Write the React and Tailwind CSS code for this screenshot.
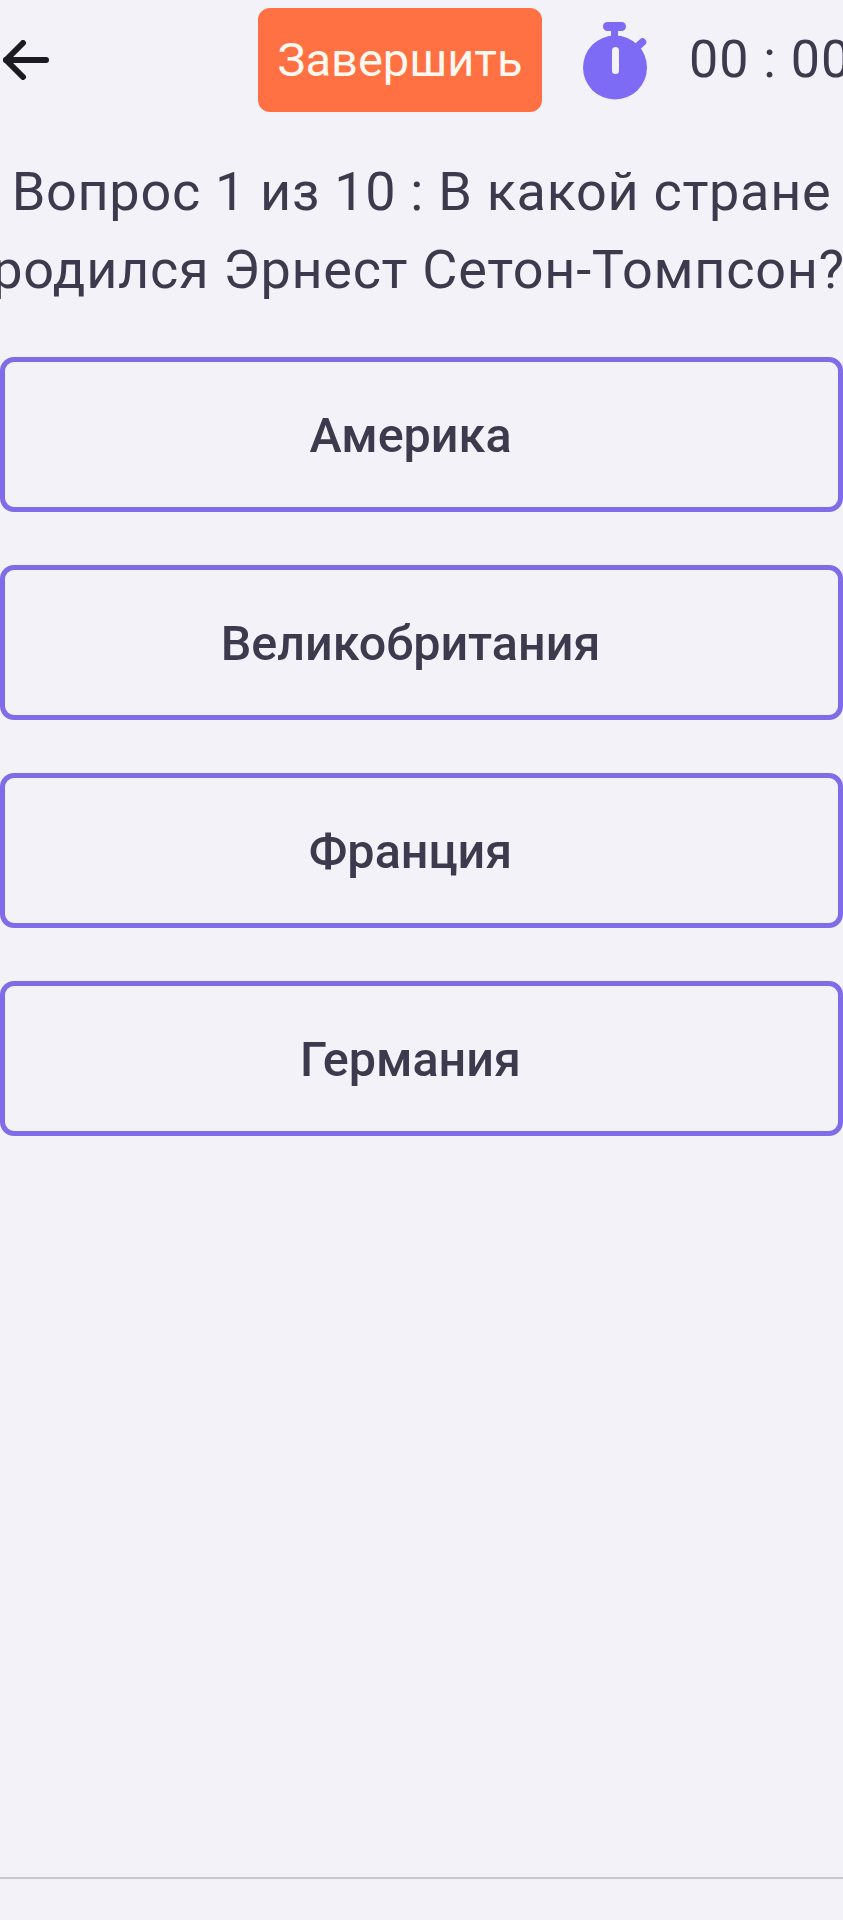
import React from 'react';

const answers = ['Америка', 'Великобритания', 'Франция', 'Германия'];

function Stopwatch() {
  return (
    <svg width="66" height="80" viewBox="0 0 66 80" className="shrink-0">
      <rect x="21" y="1" width="23" height="9" rx="4.5" fill="#7e6bf5" />
      <rect x="29" y="6" width="7" height="14" fill="#7e6bf5" />
      <path d="M54 27 L60.500 21" stroke="#7e6bf5" strokeWidth="7.500" strokeLinecap="round" />
      <circle cx="33" cy="46.500" r="32" fill="#7e6bf5" />
      <rect x="30" y="26" width="7" height="27" rx="3.500" fill="#f3f2f8" />
    </svg>
  );
}

export default function App() {
  return (
    <div className="relative h-[1920px] w-[843px] overflow-hidden bg-[#f3f2f8] font-['Roboto',sans-serif] text-[#3c3a4c]">
      <header className="flex h-[120px] items-start">
        <svg width="48" height="40" viewBox="0 0 48 40" className="mt-[40px] ml-[2px] shrink-0" fill="none" stroke="#1c1b24" strokeWidth="6" strokeLinecap="round" strokeLinejoin="round">
          <path d="M4 20 H44" />
          <path d="M21 3 L4 20 L21 37" />
        </svg>
        <button className="mt-[8px] ml-[208px] flex h-[104px] w-[284px] shrink-0 items-center justify-center rounded-[12px] bg-[#ff7043] text-[47px] text-[#fff8ef]">
          Завершить
        </button>
        <div className="mt-[21px] ml-[40px] shrink-0">
          <Stopwatch />
        </div>
        <span className="mt-[28px] ml-[41px] shrink-0 whitespace-nowrap text-[52px] leading-[64px] tracking-[1px]">00 : 00</span>
      </header>
      <h1 className="mt-[33px] -mx-[40px] text-center text-[54px] leading-[78px] font-normal tracking-[0.7px] whitespace-nowrap">
        Вопрос 1 из 10 : В какой стране
        <br />
        <span className="pr-[6px]">родился Эрнест Сетон-Томпсон?</span>
      </h1>
      <div className="mt-[48px] flex flex-col gap-[53px]">
        {answers.map((a) => (
          <button key={a} className="flex h-[155px] w-full items-center justify-center rounded-[14px] border-[5px] border-[#806ce8] pt-[4px] pr-[22px] text-[48.500px] font-medium">
            {a}
          </button>
        ))}
      </div>
      <div className="absolute top-[1877px] left-0 h-[2px] w-full bg-[#c9c8d0]" />
    </div>
  );
}
